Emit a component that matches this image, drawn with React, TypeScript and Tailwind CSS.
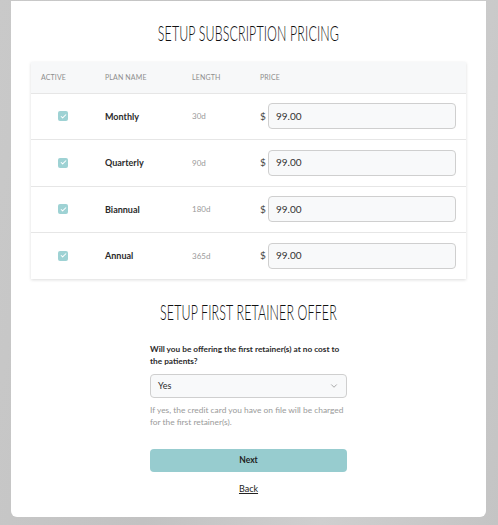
import { ChevronDown, Check } from "lucide-react";

const plans = [
  { name: "Monthly", length: "30d", price: "99.00" },
  { name: "Quarterly", length: "90d", price: "99.00" },
  { name: "Biannual", length: "180d", price: "99.00" },
  { name: "Annual", length: "365d", price: "99.00" },
];

function Heading({ children }: { children: React.ReactNode }) {
  return (
    <div className="flex h-[24px] items-center justify-center overflow-visible">
      <h2 className="inline-block origin-center scale-x-[0.565] whitespace-nowrap font-['Lato'] text-[22px] font-light leading-none tracking-[0.01em] text-[#111]">
        {children}
      </h2>
    </div>
  );
}

export default function App() {
  return (
    <div className="min-h-[525px] bg-[linear-gradient(100deg,#c9c9c9_0%,#c2c2c2_40%,#cfcfcf_70%,#c4c4c4_100%)] pt-px font-['Lato',sans-serif]">
      <div className="ml-[11px] mr-[12px] rounded-b-[6px] bg-white pb-[22px] pt-[20px]">
        <Heading>SETUP SUBSCRIPTION PRICING</Heading>

        <div className="mx-[20px] mt-[17px] bg-white shadow-[0_1px_3px_rgba(0,0,0,0.14)]">
          <div className="flex h-[30.5px] items-center bg-[#f7f8f9] text-[7px] uppercase tracking-[0.02em] text-[#8e8e8e]">
            <div className="w-[74px] pl-[10px]">Active</div>
            <div className="w-[87px]">Plan Name</div>
            <div className="w-[68px]">Length</div>
            <div className="flex-1">Price</div>
          </div>
          {plans.map((plan) => (
            <div key={plan.name} className="flex h-[46.5px] items-center border-t border-[#e6e6e6]">
              <div className="w-[74px] pl-[27px]">
                <span className="flex h-[10px] w-[10px] items-center justify-center rounded-[2px] bg-[#9ed2d4]">
                  <Check size={7} strokeWidth={3.5} className="text-white" />
                </span>
              </div>
              <div className="w-[87px] text-[9px] font-bold text-[#2b2b2b]">{plan.name}</div>
              <div className="w-[68px] text-[8px] text-[#9a9a9a]">{plan.length}</div>
              <div className="flex flex-1 items-center pr-[10px]">
                <span className="w-[8px] text-[10px] text-[#444]">$</span>
                <div className="flex h-[26px] flex-1 items-center rounded-[4px] border border-[#cfcfcf] bg-[#f8f9fa] pl-[7px] text-[10px] text-[#333]">
                  {plan.price}
                </div>
              </div>
            </div>
          ))}
        </div>

        <div className="mt-[21px]">
          <Heading>SETUP FIRST RETAINER OFFER</Heading>
        </div>

        <div className="mx-auto mt-[19px] w-[197px]">
          <p className="text-[8.25px] font-bold leading-[12px] text-[#2b2b2b]">
            Will you be offering the first retainer(s) at no cost to the patients?
          </p>
          <div className="mt-[7px] flex h-[24px] items-center justify-between rounded-[4px] border border-[#cfcfcf] bg-[#f8f9fa] pl-[7px] pr-[7px] text-[9px] text-[#2b2b2b]">
            <span>Yes</span>
            <ChevronDown size={10} strokeWidth={1.5} className="text-[#777]" />
          </div>
          <p className="mt-[6px] text-[8.4px] leading-[12px] text-[#9a9a9a]">
            If yes, the credit card you have on file will be charged for the first retainer(s).
          </p>
          <button className="mt-[21px] flex h-[23px] w-full items-center justify-center rounded-[4px] bg-[#97cccf] text-[8.5px] font-bold text-[#222]">
            Next
          </button>
          <div className="mt-[11px] text-center text-[9px] leading-[12px]">
            <a href="#" className="text-[#222] underline">
              Back
            </a>
          </div>
        </div>
      </div>
    </div>
  );
}
